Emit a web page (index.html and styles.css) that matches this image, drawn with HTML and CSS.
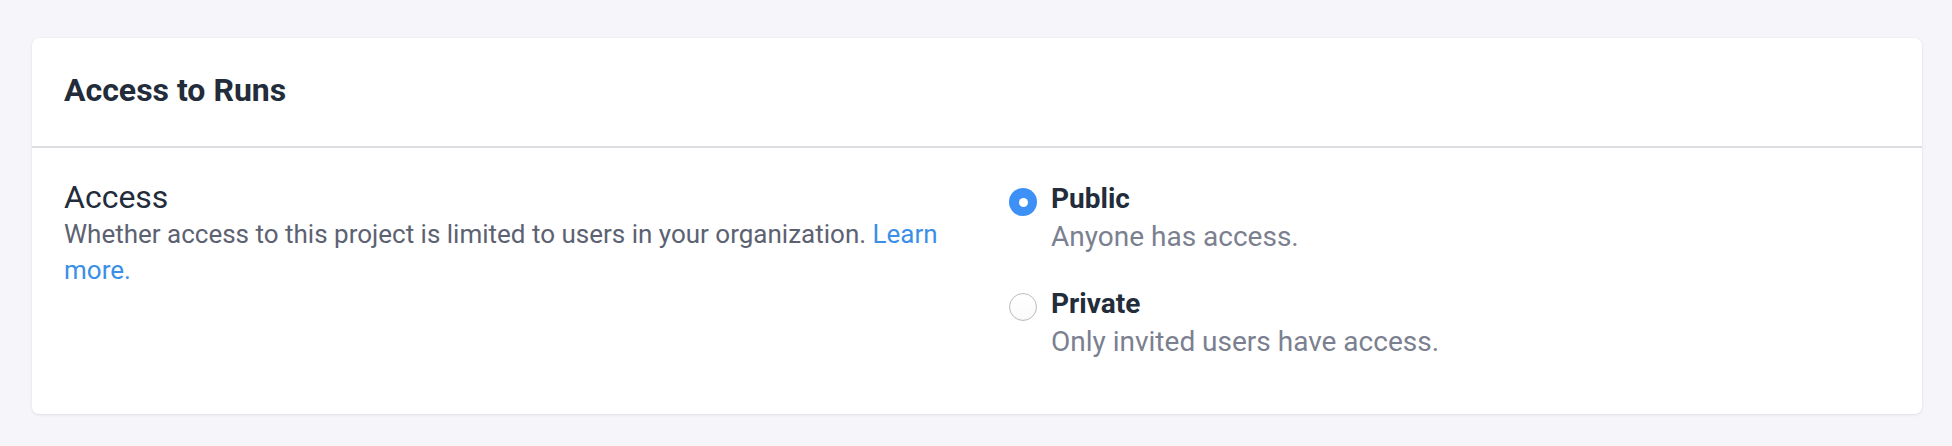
FILE: index.html
```html
<!DOCTYPE html>
<html lang="en">
<head>
<meta charset="utf-8">
<title>Access to Runs</title>
<link rel="stylesheet" href="styles.css">
</head>
<body>
<section class="card">
  <header class="card-header">
    <h2 class="card-title">Access to Runs</h2>
  </header>
  <div class="card-body">
    <div class="field-info">
      <div class="field-label">Access</div>
      <p class="field-help">Whether access to this project is limited to users in your organization. <a class="link" href="#">Learn more.</a></p>
    </div>
    <div class="options">
      <label class="option">
        <span class="radio radio-checked"><span class="radio-dot"></span></span>
        <span class="option-text">
          <span class="option-title">Public</span>
          <span class="option-desc">Anyone has access.</span>
        </span>
      </label>
      <label class="option">
        <span class="radio"></span>
        <span class="option-text">
          <span class="option-title">Private</span>
          <span class="option-desc">Only invited users have access.</span>
        </span>
      </label>
    </div>
  </div>
</section>
</body>
</html>
```

FILE: styles.css
```css
html, body {
  margin: 0;
  padding: 0;
}
body {
  background: #f6f6fa;
  font-family: Roboto, "Liberation Sans", Arial, sans-serif;
  padding: 38px 30px 0 32px;
  height: 446px;
  box-sizing: border-box;
}
.card {
  background: #ffffff;
  border-radius: 7px;
  box-shadow: 0 1px 3px rgba(30, 30, 60, 0.10), 0 0 1px rgba(30, 30, 60, 0.08);
}
.card-header {
  height: 108px;
  display: flex;
  align-items: center;
  padding: 0 32px;
  border-bottom: 2px solid #dcdce1;
}
.card-title {
  margin: 0;
  font-size: 32px;
  font-weight: 700;
  color: #222c3a;
  line-height: 40px;
  position: relative;
  top: -2px;
}
.card-body {
  display: grid;
  grid-template-columns: 1fr 1fr;
  column-gap: 64px;
  padding: 30px 32px 53px 32px;
}
.field-label {
  font-size: 32px;
  line-height: 38px;
  color: #222c3a;
}
.field-help {
  margin: 0;
  font-size: 26px;
  line-height: 36px;
  color: #5c6272;
}
.link {
  color: #3b8fe6;
  text-decoration: none;
}
.options {
  display: flex;
  flex-direction: column;
  gap: 29px;
  padding-top: 2px;
}
.option {
  display: flex;
  align-items: flex-start;
  gap: 14px;
}
.radio {
  width: 28px;
  height: 28px;
  box-sizing: border-box;
  border-radius: 50%;
  margin-top: 8px;
  flex: none;
  border: 1px solid #bdbdc0;
  background: linear-gradient(#ffffff, #fafafa);
  box-shadow: inset 0 -1px 1px rgba(0, 0, 0, 0.04);
  display: flex;
  align-items: center;
  justify-content: center;
}
.radio-checked {
  border: none;
  box-shadow: none;
  background: #3d90f5;
}
.radio-dot {
  width: 9px;
  height: 9px;
  border-radius: 50%;
  background: #ffffff;
}
.option-text {
  display: flex;
  flex-direction: column;
}
.option-title {
  font-size: 28px;
  font-weight: 700;
  line-height: 38px;
  color: #222c3a;
}
.option-desc {
  font-size: 28px;
  line-height: 38px;
  color: #7b8090;
}
```
